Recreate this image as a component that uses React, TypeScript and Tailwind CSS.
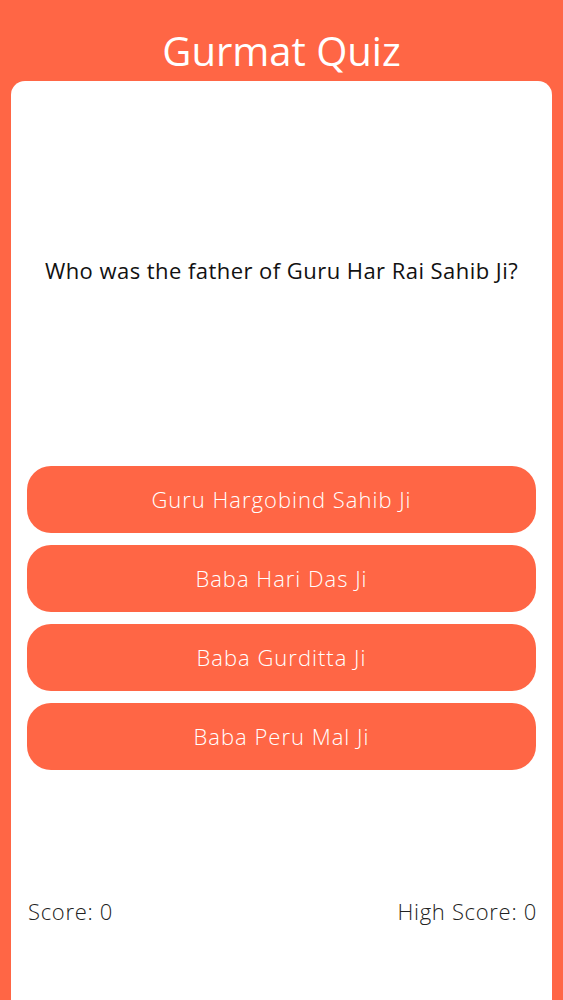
const answers = [
  "Guru Hargobind Sahib Ji",
  "Baba Hari Das Ji",
  "Baba Gurditta Ji",
  "Baba Peru Mal Ji",
];

export default function App() {
  return (
    <div
      className="flex h-[1000px] flex-col overflow-hidden bg-[#ff6645]"
      style={{ fontFamily: "'Open Sans', Lato, sans-serif" }}
    >
      <header className="flex h-[81px] shrink-0 items-center justify-center pt-[20px]">
        <h1 className="text-[40px] leading-none font-normal text-white">Gurmat Quiz</h1>
      </header>

      <main className="mx-[11px] flex flex-1 flex-col rounded-t-[14px] bg-white px-4">
        <p className="pt-[175px] text-center text-[22px] leading-[28px] font-medium tracking-[0.45px] text-[#111]">
          Who was the father of Guru Har Rai Sahib Ji?
        </p>

        <div className="mt-[182px] flex flex-col gap-3">
          {answers.map((a) => (
            <button
              key={a}
              type="button"
              className="h-[67px] w-full rounded-[24px] bg-[#ff6645] text-[22px] font-light tracking-[1px] text-white"
            >
              {a}
            </button>
          ))}
        </div>

        <div className="mt-[127px] -mr-[1px] flex items-center justify-between pl-px text-[22px] leading-[28px] font-light tracking-[0.7px] text-[#222]">
          <span>Score: 0</span>
          <span>High Score: 0</span>
        </div>
      </main>
    </div>
  );
}
